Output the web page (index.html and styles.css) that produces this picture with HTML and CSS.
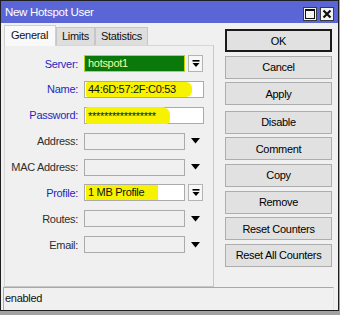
FILE: index.html
```html
<!DOCTYPE html>
<html lang="en">
<head>
    <meta charset="UTF-8">
    <title>New Hotspot User</title>
    <link rel="stylesheet" href="styles.css">
</head>
<body>
    <div class="window">
        <div class="titlebar">
            <span class="title">New Hotspot User</span>
            <div class="title-buttons">
                <span class="tb-btn">
                    <svg width="10" height="10" viewBox="0 0 10 10"><rect x="0.5" y="0.5" width="9" height="9" fill="none" stroke="#111" stroke-width="1"/><rect x="0" y="0" width="10" height="2" fill="#111"/></svg>
                </span>
                <span class="tb-btn">
                    <svg width="10" height="10" viewBox="0 0 10 10"><path d="M1.5 1.5 L8.5 8.5 M8.5 1.5 L1.5 8.5" stroke="#111" stroke-width="2.2"/></svg>
                </span>
            </div>
        </div>

        <div class="content">
            <div class="tabs-area">
                <div class="tabs">
                    <div class="tab active">General</div>
                    <div class="tab">Limits</div>
                    <div class="tab">Statistics</div>
                </div>

                <div class="panel">
                    <div class="row">
                        <span class="lbl key">Server:</span>
                        <div class="field green">hotspot1</div>
                        <span class="drop boxed">
                            <svg width="8" height="8" viewBox="0 0 8 8"><rect x="0.5" y="0" width="7" height="1.6" fill="#000"/><path d="M0.5 3 H7.5 L4 7 Z" fill="#000"/></svg>
                        </span>
                    </div>
                    <div class="row">
                        <span class="lbl key">Name:</span>
                        <div class="field white wide"><span class="mark mark-name">44:6D:57:2F:C0:53</span></div>
                    </div>
                    <div class="row">
                        <span class="lbl key">Password:</span>
                        <div class="field white wide"><span class="mark mark-pass">*****************</span></div>
                    </div>
                    <div class="row">
                        <span class="lbl">Address:</span>
                        <div class="field"></div>
                        <span class="drop">
                            <svg width="9" height="6" viewBox="0 0 9 6"><path d="M0 0 H9 L4.5 5.5 Z" fill="#000"/></svg>
                        </span>
                    </div>
                    <div class="row">
                        <span class="lbl">MAC Address:</span>
                        <div class="field"></div>
                        <span class="drop">
                            <svg width="9" height="6" viewBox="0 0 9 6"><path d="M0 0 H9 L4.5 5.5 Z" fill="#000"/></svg>
                        </span>
                    </div>
                    <div class="row">
                        <span class="lbl key">Profile:</span>
                        <div class="field white"><span class="mark mark-profile">1 MB Profile</span></div>
                        <span class="drop boxed">
                            <svg width="8" height="8" viewBox="0 0 8 8"><rect x="0.5" y="0" width="7" height="1.6" fill="#000"/><path d="M0.5 3 H7.5 L4 7 Z" fill="#000"/></svg>
                        </span>
                    </div>
                    <div class="row">
                        <span class="lbl">Routes:</span>
                        <div class="field"></div>
                        <span class="drop">
                            <svg width="9" height="6" viewBox="0 0 9 6"><path d="M0 0 H9 L4.5 5.5 Z" fill="#000"/></svg>
                        </span>
                    </div>
                    <div class="row">
                        <span class="lbl">Email:</span>
                        <div class="field"></div>
                        <span class="drop">
                            <svg width="9" height="6" viewBox="0 0 9 6"><path d="M0 0 H9 L4.5 5.5 Z" fill="#000"/></svg>
                        </span>
                    </div>
                </div>
            </div>

            <div class="buttons">
                <button class="btn default">OK</button>
                <button class="btn">Cancel</button>
                <button class="btn">Apply</button>
                <button class="btn group-start">Disable</button>
                <button class="btn">Comment</button>
                <button class="btn">Copy</button>
                <button class="btn">Remove</button>
                <button class="btn">Reset Counters</button>
                <button class="btn">Reset All Counters</button>
            </div>
        </div>

        <div class="status">enabled</div>
    </div>
</body>
</html>
```

FILE: styles.css
```css
* {
    margin: 0;
    padding: 0;
    box-sizing: border-box;
}

body {
    font-family: "Liberation Sans", Arial, sans-serif;
    font-size: 11px;
    letter-spacing: -0.3px;
    background: #a2a2a2;
    width: 340px;
    height: 315px;
    overflow: hidden;
}

.window {
    width: 339px;
    height: 311px;
    background: #f0f0f0;
    border: 1px solid #1e1e1e;
    display: flex;
    flex-direction: column;
}

/* title bar */
.titlebar {
    height: 22px;
    background: #5a66d6;
    display: flex;
    align-items: center;
    justify-content: space-between;
    padding: 0 4px 0 4px;
}

.title {
    color: #fff;
    font-size: 11.5px;
}

.title-buttons {
    display: flex;
    gap: 3px;
    margin-top: 3px;
}

.tb-btn {
    width: 14px;
    height: 14px;
    background: #f4f4f4;
    border: 1px solid #3a3a3a;
    display: flex;
    align-items: center;
    justify-content: center;
}

/* main area */
.content {
    flex: 1;
    display: flex;
}

.tabs-area {
    width: 213px;
    padding: 2px 0 0 3px;
}

.tabs {
    height: 20px;
    display: flex;
    align-items: flex-end;
}

.tab {
    height: 18px;
    padding: 0 5px;
    line-height: 17px;
    background: #dedede;
    border: 1px solid #c6c6c6;
    border-bottom: none;
    color: #111;
}

.tab.active {
    height: 21px;
    margin-bottom: -1px;
    padding: 0 7px 0 6px;
    line-height: 19px;
    background: #f9f9f9;
    border-color: #cfcfcf;
    position: relative;
    z-index: 1;
}

.panel {
    height: 242px;
    border: 1px solid #d6d6d6;
    border-right-color: #c8c8c8;
    border-bottom-color: #c8c8c8;
    padding-top: 9px;
    display: flex;
    flex-direction: column;
    gap: 8.9px;
}

.row {
    height: 17px;
    display: flex;
    align-items: center;
}

.lbl {
    width: 74px;
    text-align: right;
    padding-right: 1px;
    margin-right: 5px;
    color: #2e2e2e;
}

.lbl.key {
    color: #1f27c0;
}

.field {
    width: 101px;
    height: 17px;
    border: 1px solid #ababab;
    background: #f0f0f0;
    line-height: 15px;
    padding-left: 1px;
    white-space: nowrap;
    overflow: visible;
    color: #111;
}

.field.white {
    background: #fff;
}

.field.wide {
    width: 120px;
}

.field.green {
    background: #0a780a;
    border: 1px solid #c4d400;
    color: #f2ff9c;
    padding-left: 3px;
}

.mark {
    display: inline-block;
    height: 15px;
    background: #f6f200;
    padding-left: 2px;
}

.mark-name {
    width: 106px;
    border-radius: 2px 6px 6px 2px;
}

.mark-pass {
    width: 84px;
    height: 17px;
    margin-top: -1px;
    border-radius: 2px 8px 4px 2px;
    line-height: 19px;
}

.mark-profile {
    width: 72px;
}

.drop {
    width: 15px;
    height: 17px;
    margin-left: 3px;
    display: flex;
    align-items: center;
    justify-content: center;
}

.drop.boxed {
    border: 1px solid #b4b4b4;
    background: #f7f7f7;
}

/* buttons column */
.buttons {
    margin-left: 11px;
    width: 107px;
    padding-top: 6px;
    display: flex;
    flex-direction: column;
    gap: 3.6px;
}

.btn {
    height: 23px;
    font-family: inherit;
    font-size: 11px;
    letter-spacing: -0.3px;
    color: #000;
    background: #e1e1e1;
    border: 1px solid #adadad;
}

.btn.default {
    border: 2px solid #1a1a1a;
}

.btn.group-start {
    margin-top: 2px;
}

/* status bar */
.status {
    height: 23px;
    margin: 0 4px 0 2px;
    border-top: 1px solid #a8a8a8;
    border-left: 1px solid #a8a8a8;
    border-right: 1px solid #e4e4e4;
    padding-left: 1px;
    line-height: 20px;
    color: #111;
}
```
